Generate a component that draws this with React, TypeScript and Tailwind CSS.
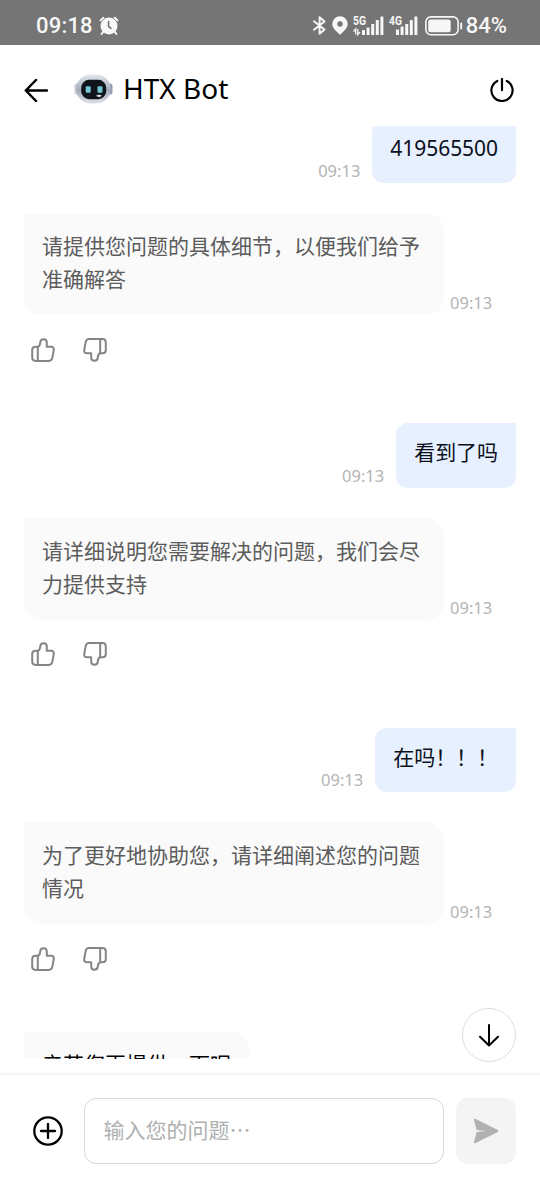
import type { ReactNode } from 'react';

interface Message {
  from: 'bot' | 'user';
  text: string;
  time: string;
}

const messages: Message[] = [
  { from: 'bot', text: '请提供您问题的具体细节，以便我们给予准确解答', time: '09:13' },
  { from: 'user', text: '看到了吗', time: '09:13' },
  { from: 'bot', text: '请详细说明您需要解决的问题，我们会尽力提供支持', time: '09:13' },
  { from: 'user', text: '在吗！！！', time: '09:13' },
  { from: 'bot', text: '为了更好地协助您，请详细阐述您的问题情况', time: '09:13' },
];

function ThumbIcon({ down = false }: { down?: boolean }) {
  return (
    <svg
      className={`w-6 h-6 text-[#858585] ${down ? 'rotate-180' : ''}`}
      fill="none"
      stroke="currentColor"
      strokeWidth={2}
      strokeLinecap="round"
      strokeLinejoin="round"
      viewBox="0 0 24 24"
    >
      <path d="M6.8 8.8 C8.5 8.2 9.1 6.6 9.2 4.6 C9.3 2.4 10.4 1.2 12.5 1.2 C14.7 1.2 15.8 2.6 15.8 4.6 V8.8 H20.2 C22.1 8.8 23.1 10 22.8 11.8 L21.4 19.6 C21 21.8 19.9 22.9 17.9 22.9 H4.6 C2.4 22.9 1.2 21.7 1.2 19.6 V12.1 C1.2 10 2.4 8.8 4.6 8.8 Z" />
      <path d="M6.8 8.8 V22.9" />
    </svg>
  );
}

function Feedback() {
  return (
    <div className="flex gap-7 h-[108px] pt-[22.5px] pl-[7px]">
      <button className="h-6">
        <ThumbIcon />
      </button>
      <button className="h-6">
        <ThumbIcon down />
      </button>
    </div>
  );
}

function Time({ children }: { children: ReactNode }) {
  return <span className="shrink-0 text-[16.5px] leading-6 text-[#b4b4b4]">{children}</span>;
}

function BotMessage({ text, time }: { text: string; time: string }) {
  return (
    <div>
      <div className="flex items-end gap-1.5">
        <div className="w-[420px] h-[102px] px-[18px] pt-[17px] rounded-[18px] rounded-tl-none bg-[#fafafa] text-[21px] leading-[33px] text-[#5c5c5c]">
          {text}
        </div>
        <Time>{time}</Time>
      </div>
      <Feedback />
    </div>
  );
}

function UserMessage({ text, time }: { text: string; time: string }) {
  return (
    <div className="flex items-end justify-end gap-3 mb-[30px]">
      <Time>{time}</Time>
      <div className="h-[64.5px] px-[18px] pt-[13px] rounded-xl rounded-tr-none bg-[#e6f0fe] text-[21px] leading-[33px] tracking-[-0.05px] text-[#0b0f1a]">
        {text}
      </div>
    </div>
  );
}

function SignalBars({ heights }: { heights: number[] }) {
  return (
    <>
      {heights.map((h, i) => (
        <rect key={h} x={i * 4.6} y={19 - h} width="3" height={h} rx="0.6" />
      ))}
    </>
  );
}

function StatusBar() {
  return (
    <div className="flex h-[45px] shrink-0 items-center bg-[#757575] pt-1.5 pl-9 pr-[33px] font-[Roboto,sans-serif] text-[#f7f7f7]">
      <span className="text-[22px] font-medium leading-6 tracking-[0.2px]">09:18</span>
      <svg className="ml-1.5 w-5 h-5" viewBox="0 0 20 20" fill="currentColor">
        <circle cx="10" cy="10" r="8.5" />
        <path d="M4.5 15.5 L2.6 18 M15.5 15.5 L17.4 18 M1.5 4.4 L4.3 1.7 M18.5 4.4 L15.7 1.7" stroke="currentColor" strokeWidth="2" strokeLinecap="round" />
        <path d="M9.6 5.5 V10.5 L12 12.3" fill="none" stroke="#757575" strokeWidth="1.6" strokeLinecap="round" />
      </svg>
      <div className="ml-auto flex items-center">
        <svg className="w-[13px] h-[19px]" viewBox="0 0 13 19" fill="none" stroke="currentColor" strokeWidth="2" strokeLinejoin="round" strokeLinecap="round">
          <path d="M1 5.3 L11.5 13.5 L6.6 17.7 V1.3 L11.5 5.5 L1 13.7" />
        </svg>
        <svg className="ml-1.5 w-4 h-[19px]" viewBox="0 0 16 19" fill="currentColor">
          <path fillRule="evenodd" d="M8 0.3 A7.7 7.7 0 0 0 0.3 8 C0.3 12.5 5 15.8 8 18.8 C11 15.8 15.7 12.5 15.7 8 A7.7 7.7 0 0 0 8 0.3 Z M8 5.3 A2.7 2.7 0 1 1 8 10.7 A2.7 2.7 0 0 1 8 5.3 Z" />
        </svg>
        <svg className="ml-[5px] w-[31px] h-7" viewBox="0 -4 31 28" fill="currentColor">
          <text x="0" y="8.8" fontSize="12" fontWeight="700" textLength="13" lengthAdjust="spacingAndGlyphs">5G</text>
          <path d="M0.5 15.5 L2.7 13 V18.5 M4.7 13 V18.5 L7 16" fill="none" stroke="currentColor" strokeWidth="1.3" />
          <g transform="translate(9 0)">
            <SignalBars heights={[5, 7.5, 11, 15, 18.5]} />
          </g>
        </svg>
        <svg className="ml-[5px] w-[29px] h-7" viewBox="0 -4 29 28" fill="currentColor">
          <text x="0" y="8.8" fontSize="12" fontWeight="700" textLength="13" lengthAdjust="spacingAndGlyphs">4G</text>
          <g transform="translate(7 0)">
            <SignalBars heights={[5.5, 8.5, 11, 15, 18.5]} />
          </g>
        </svg>
        <svg className="ml-[7px] w-[38px] h-5" viewBox="0 0 38 20" fill="none" stroke="currentColor">
          <rect x="0.9" y="0.9" width="32.2" height="17.8" rx="5" strokeWidth="1.6" />
          <rect x="3.2" y="3.4" width="22.5" height="12.8" rx="2.5" fill="currentColor" stroke="none" />
          <path d="M36.2 7.5 V12.5" strokeWidth="2" strokeLinecap="round" />
        </svg>
        <span className="ml-[3px] text-[22px] font-medium leading-6">84%</span>
      </div>
    </div>
  );
}

function BotAvatar() {
  return (
    <svg className="w-[39px] h-[30px]" viewBox="0 0 39 30">
      <defs>
        <linearGradient id="shell" x1="0" y1="0" x2="0" y2="1">
          <stop offset="0" stopColor="#e2e5ec" />
          <stop offset="0.55" stopColor="#a3abba" />
          <stop offset="1" stopColor="#dde2e9" />
        </linearGradient>
      </defs>
      <rect x="0.5" y="9.5" width="5" height="11" rx="2.5" fill="#c3cad6" />
      <rect x="33.5" y="9.5" width="5" height="11" rx="2.5" fill="#8f9aac" />
      <rect x="2.3" y="0.6" width="34.4" height="28.8" rx="15" ry="13.5" fill="url(#shell)" />
      <rect x="7.2" y="5.8" width="25" height="19.4" rx="8" fill="#10151b" />
      <rect x="11.7" y="12.2" width="5" height="6.6" rx="1.2" fill="#74c6d6" />
      <rect x="23.5" y="12.2" width="5" height="6.6" rx="1.2" fill="#74c6d6" />
      <ellipse cx="25" cy="21.8" rx="2.7" ry="1.1" fill="#d7dce2" />
    </svg>
  );
}

function Header() {
  return (
    <header className="flex h-[81px] shrink-0 items-center bg-white pt-2 pl-6 pr-[26px]">
      <button>
        <svg className="w-6 h-6" fill="none" stroke="#000" strokeWidth={2.5} strokeLinecap="round" strokeLinejoin="round" viewBox="0 0 24 24">
          <path d="M12 2 L1.8 12.5 L12 23 M1.8 12.5 H23" />
        </svg>
      </button>
      <div className="ml-[25.5px] -mt-px">
        <BotAvatar />
      </div>
      <h1 className="ml-[10.5px] -mt-1 text-[28px] leading-8 text-black">HTX Bot</h1>
      <button className="ml-auto">
        <svg className="w-6 h-6" fill="none" stroke="#000" strokeWidth={2.2} strokeLinecap="round" viewBox="0 0 24 24">
          <path d="M12 1 V12.2 M7.3 2.9 A10.6 10.6 0 1 0 16.7 2.9" />
        </svg>
      </button>
    </header>
  );
}

function Composer() {
  return (
    <footer className="flex h-[127px] shrink-0 items-start border-t-2 border-[#f5f5f5] bg-white pl-[33px] pr-6 pt-[23px]">
      <button className="mt-[18px]">
        <svg className="w-[30px] h-[30px]" fill="none" stroke="#000" strokeWidth={2.3} strokeLinecap="round" viewBox="0 0 30 30">
          <circle cx="15" cy="15" r="13.7" />
          <path d="M15 8 V22 M8 15 H22" />
        </svg>
      </button>
      <div className="ml-[21px] flex h-[66px] w-[360px] items-center rounded-xl border border-[#d8d8d8] px-[18.5px] text-[21px] text-[#b0b0b0]">
        输入您的问题⋯
      </div>
      <button className="ml-3 flex h-[66px] w-[60px] items-center justify-center rounded-xl bg-[#f4f4f4]">
        <svg className="w-[26px] h-[26px]" viewBox="0 0 26 26" fill="#b1b1b1">
          <path d="M2.2 0.8 L24.8 11.9 Q26 12.9 24.8 13.9 L2.2 25.2 Q0.7 25.6 1 24 L3.6 13.9 L13 12.9 L3.6 12 L1 2 Q0.8 0.5 2.2 0.8 Z" />
        </svg>
      </button>
    </footer>
  );
}

export default function App() {
  return (
    <div
      lang="zh-CN"
      className="flex h-[1200px] w-[540px] flex-col overflow-hidden bg-white font-['Noto_Sans','Noto_Sans_CJK_SC',sans-serif]"
    >
      <StatusBar />
      <Header />

      <main className="relative h-[947px] shrink-0">
        <div className="h-[932.5px] overflow-hidden px-6">
          {/* Older message, scrolled partly under the header */}
          <div className="-mt-[7.5px]">
            <UserMessage text="419565500" time="09:13" />
          </div>
          {messages.map((m, i) =>
            m.from === 'bot' ? (
              <BotMessage key={i} text={m.text} time={m.time} />
            ) : (
              <UserMessage key={i} text={m.text} time={m.time} />
            )
          )}
          <div className="w-[225px] h-[66px] px-[18px] pt-[15.5px] rounded-[18px] rounded-tl-none bg-[#fafafa] text-[21px] leading-[33px] text-black">
            辛苦您再提供一下呢
          </div>
        </div>

        {/* Jump to latest */}
        <button className="absolute right-6 bottom-[11px] flex h-[54px] w-[54px] items-center justify-center rounded-full border-[1.5px] border-[#dedede] bg-white">
          <svg className="w-6 h-6" fill="none" stroke="#000" strokeWidth={2} strokeLinecap="round" strokeLinejoin="round" viewBox="0 0 24 24">
            <path d="M12 2 V22.5 M3 13.7 L12 22.5 L21 13.7" />
          </svg>
        </button>
      </main>

      <Composer />
    </div>
  );
}
